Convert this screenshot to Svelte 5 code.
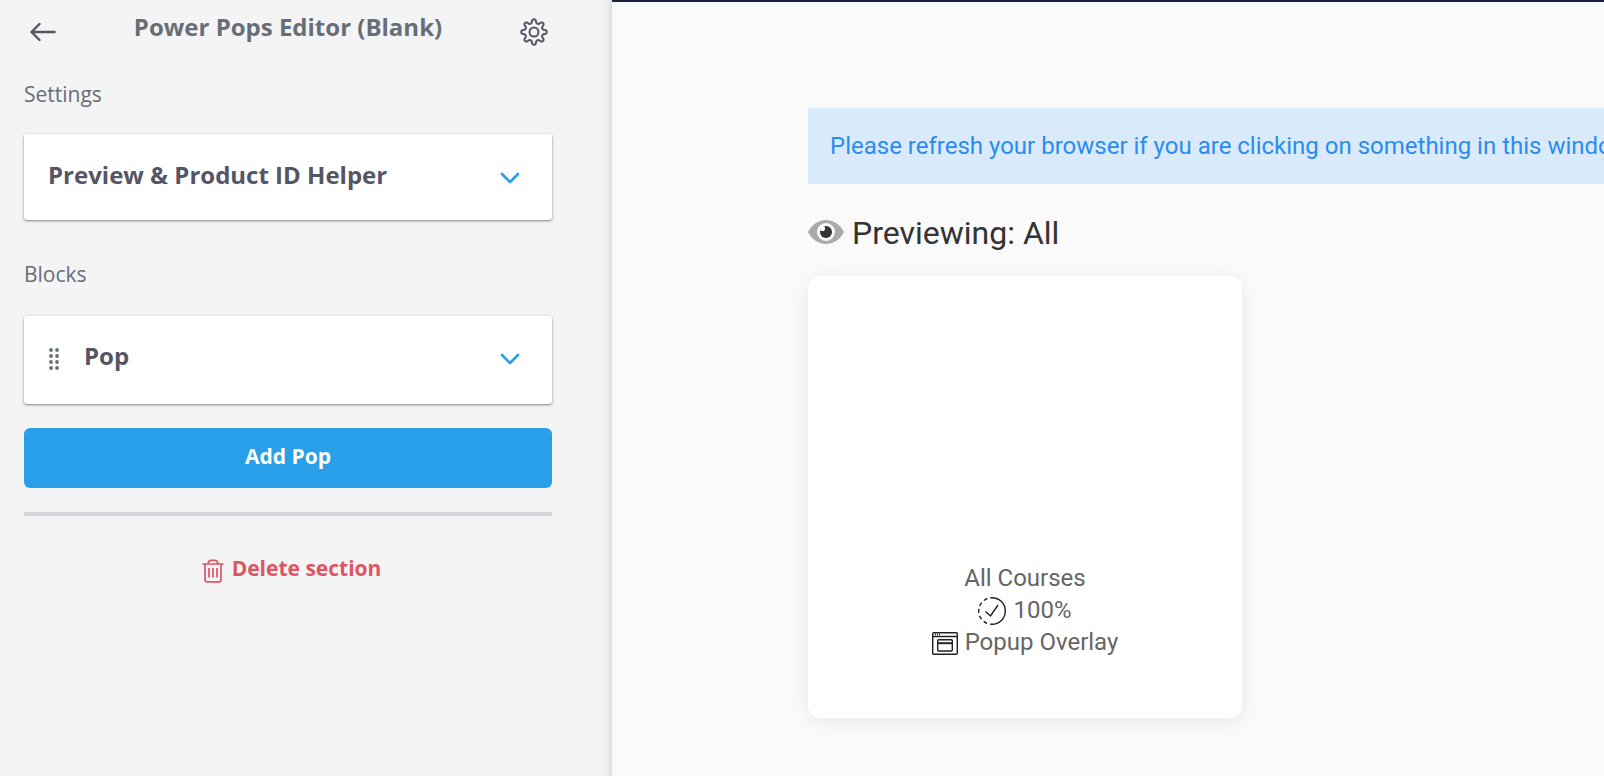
<script>
  const gear = (() => {
    const pts = [];
    const n = 8;
    const polar = (r, deg) => {
      const a = (deg * Math.PI) / 180;
      return `${(14 + r * Math.cos(a)).toFixed(2)} ${(14 + r * Math.sin(a)).toFixed(2)}`;
    };
    for (let i = 0; i < n; i++) {
      const c = i * 45 - 90;
      pts.push(`${i ? 'L' : 'M'}${polar(9.6, c - 14)}`);
      pts.push(`L${polar(12, c - 8)}`);
      pts.push(`Q${polar(13.8, c)} ${polar(12, c + 8)}`);
      pts.push(`L${polar(9.6, c + 14)}`);
      pts.push(`Q${polar(8.3, c + 22.5)} ${polar(9.6, c + 31)}`);
    }
    return pts.join('') + 'Z';
  })();
  const dots = [0, 1, 2, 3];
</script>

{#snippet chevron()}
  <svg class="chevron" width="20" height="12" viewBox="0 0 20 12" aria-hidden="true">
    <path d="M2 2l8 8 8-8" />
  </svg>
{/snippet}

<div class="app">
  <aside>
    <header>
      <button class="icon" aria-label="Back">
        <svg width="26" height="20" viewBox="0 0 26 20" aria-hidden="true">
          <path d="M24.500 10H2M9.500 2L1.500 10l8 8" />
        </svg>
      </button>
      <h1>Power Pops Editor (Blank)</h1>
      <button class="icon" aria-label="Section settings">
        <svg width="28" height="28" viewBox="0 0 28 28" aria-hidden="true">
          <path class="thin" d={gear} />
          <circle class="thin" cx="14" cy="14" r="4.500" />
        </svg>
      </button>
    </header>

    <h2>Settings</h2>
    <button class="panel">
      <span>Preview &amp; Product ID Helper</span>
      {@render chevron()}
    </button>

    <h2 class="blocks">Blocks</h2>
    <button class="panel tall">
      <svg class="grip" width="12" height="24" viewBox="0 0 12 24" aria-hidden="true">
        {#each dots as row}
          <circle cx="3" cy={3 + row * 6} r="1.900" />
          <circle cx="9" cy={3 + row * 6} r="1.900" />
        {/each}
      </svg>
      <span>Pop</span>
      {@render chevron()}
    </button>

    <button class="add">Add Pop</button>
    <hr />
    <button class="delete">
      <svg width="22" height="24" viewBox="0 0 22 24" aria-hidden="true">
        <path d="M.5 5h21M6 5Q6.500 1.300 9 1.300h4Q15.500 1.300 16 5M3 5v15.500q0 2.300 2 2.300h12q2 0 2-2.300V5M7 9v9.500M11 9v9.500M15 9v9.500" />
      </svg>
      <span>Delete section</span>
    </button>
  </aside>

  <main>
    <p class="notice">Please refresh your browser if you are clicking on something in this window</p>
    <h2 class="previewing">
      <svg width="36" height="24" viewBox="0 0 36 24" aria-hidden="true">
        <path fill="#aaa" d="M0 12C4 4 11 0 18 0s14 4 18 12c-4 8-11 12-18 12S4 20 0 12z" />
        <circle fill="#fafafa" cx="18" cy="12" r="9" />
        <circle fill="#333" cx="18" cy="12" r="6" />
        <circle fill="#fafafa" cx="14.500" cy="8.500" r="2.600" />
      </svg>
      Previewing: All
    </h2>
    <article>
      <p>All Courses</p>
      <p>
        <svg width="28" height="28" viewBox="0 0 28 28" aria-hidden="true">
          <path d="M14 .7a13.300 13.300 0 0 1 0 26.600" />
          <path stroke-dasharray="4 2.960" stroke-dashoffset="2" d="M14 27.300A13.300 13.300 0 0 1 14 .7" />
          <path d="M7.500 14.500l5 4.500 7.500-11" />
        </svg>
        100%
      </p>
      <p>
        <svg width="26" height="24" viewBox="0 0 26 24" aria-hidden="true">
          <rect x=".7" y="1.700" width="24.600" height="21.600" rx="1" />
          <path d="M1 5.500h24M3 3.500h1M5 3.500h1M7 3.500h1" />
          <rect x="5.700" y="8.700" width="14.600" height="11.300" rx="1" />
          <path stroke-width="2" d="M6 12.200h14" />
        </svg>
        Popup Overlay
      </p>
    </article>
  </main>
</div>

<style>
  :global(body) {
    margin: 0;
    background: #fafafa;
  }
  .app {
    display: flex;
    min-height: 100vh;
    overflow: hidden;
    font-family: "Open Sans", sans-serif;
  }
  button {
    margin: 0;
    padding: 0;
    border: 0;
    background: none;
    font: inherit;
    color: inherit;
    cursor: pointer;
  }
  svg {
    flex: none;
    fill: none;
  }
  h1, h2, p {
    margin: 0;
  }
  aside {
    box-sizing: border-box;
    flex: 0 0 612px;
    padding: 8px 60px 0 24px;
    background: linear-gradient(to left, #dcdcdc, #ebebeb 4px, #f4f4f4 12px);
    color: #666e78;
  }
  header {
    display: flex;
    align-items: flex-start;
    justify-content: space-between;
    padding: 0 4px 0 6px;
  }
  header h1 {
    font-size: 24px;
    line-height: 38px;
  }
  .icon {
    display: flex;
    align-items: center;
    height: 48px;
    stroke: #555566;
    stroke-width: 2.400;
    stroke-linecap: round;
    stroke-linejoin: round;
  }
  .thin {
    stroke-width: 2;
  }
  aside h2 {
    margin: 20px 0 22px;
    font-size: 21px;
    font-weight: 400;
    line-height: 36px;
  }
  aside h2.blocks {
    margin: 36px 0 24px;
  }
  .panel {
    box-sizing: border-box;
    display: flex;
    align-items: center;
    gap: 24px;
    width: 100%;
    min-height: 86px;
    padding: 0 32px 6px 24px;
    border-radius: 3px;
    background: #fff;
    box-shadow: 0 1px 3px rgba(0, 0, 0, .4), 0 1px 1px rgba(0, 0, 0, .12);
    color: #555566;
    font-size: 24px;
    font-weight: 700;
    text-align: left;
  }
  .panel.tall {
    min-height: 88px;
    padding-bottom: 10px;
  }
  .panel span {
    flex: 1;
  }
  .panel svg {
    margin-top: 8px;
  }
  .chevron {
    stroke: #289fe8;
    stroke-width: 2.600;
    stroke-linecap: round;
    stroke-linejoin: round;
  }
  .grip {
    fill: #666e78;
  }
  .add {
    display: block;
    width: 100%;
    margin: 24px 0;
    padding: 12px 0 16px;
    border-radius: 6px;
    background: #289fe8;
    color: #fff;
    font-size: 21px;
    font-weight: 700;
    line-height: 32px;
  }
  hr {
    height: 4px;
    margin: 0;
    border: 0;
    background: #d4d5d9;
  }
  .delete {
    display: flex;
    align-items: center;
    gap: 8px;
    margin: 36px auto 0;
    padding-left: 7px;
    color: #dc5664;
    font-size: 21px;
    font-weight: 700;
    line-height: 32px;
  }
  .delete svg {
    margin-top: 6px;
    stroke: #dc5664;
    stroke-width: 1.700;
  }
  main {
    box-sizing: border-box;
    flex: 1;
    min-width: 0;
    padding: 106px 0 56px 196px;
    border-top: 2px solid #1c2143;
    background: #fafafa;
    font-family: Roboto, sans-serif;
  }
  .notice {
    padding: 22px;
    background: #d9eafa;
    color: #2b8cf0;
    font-size: 24px;
    line-height: 32px;
    white-space: nowrap;
  }
  .previewing {
    display: flex;
    align-items: center;
    gap: 8px;
    margin: 29px 0 23px;
    color: #333;
    font-size: 32px;
    font-weight: 400;
    line-height: 40px;
  }
  .previewing svg {
    margin-bottom: 2px;
  }
  article {
    box-sizing: border-box;
    width: 434px;
    padding: 286px 24px 60px;
    border-radius: 12px;
    background: #fff;
    box-shadow: 0 4px 20px rgba(0, 0, 0, .07);
    color: #666;
    font-size: 24px;
    line-height: 32px;
  }
  article p {
    display: flex;
    align-items: center;
    justify-content: center;
    gap: 7px;
  }
  article svg {
    margin-top: 1px;
    stroke: #222;
    stroke-width: 1.400;
  }
</style>
